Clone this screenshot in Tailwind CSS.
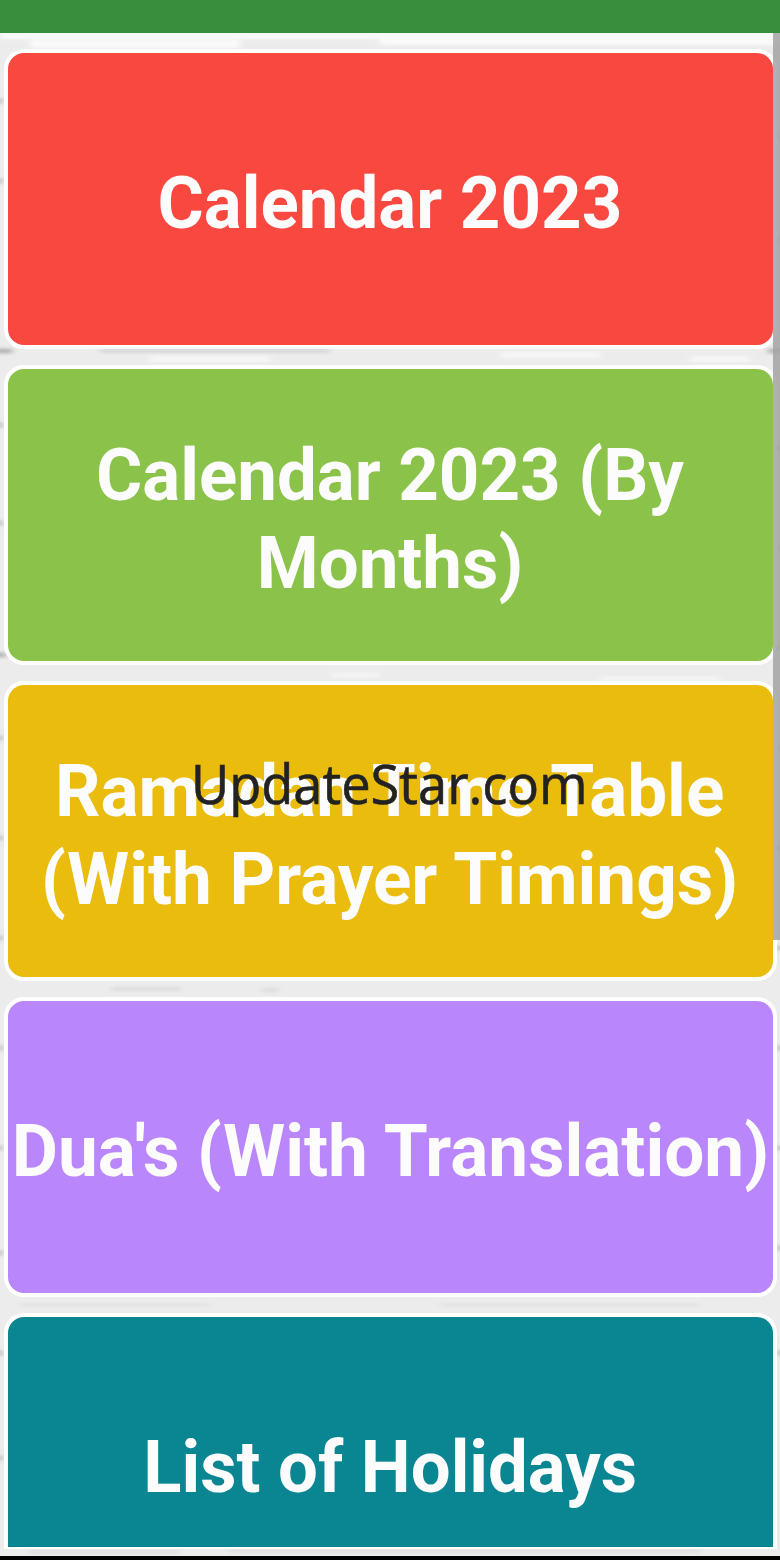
<!DOCTYPE html>
<html lang="en">
<head>
  <meta charset="UTF-8" />
  <meta name="viewport" content="width=device-width, initial-scale=1.0" />
  <title>Calendar 2023</title>
  <script src="https://cdn.jsdelivr.net/npm/@tailwindcss/browser@4"></script>
</head>
<body class="bg-black font-['Roboto',sans-serif]">
  <div class="relative flex h-[1560px] w-[780px] flex-col overflow-hidden">
    <!-- Status bar -->
    <header class="h-[33px] shrink-0 bg-[#388e3c]"></header>

    <main class="relative h-[1523px] overflow-hidden bg-[#ececed]">
      <!-- Brick wall -->
      <svg class="absolute inset-0" width="780" height="1523" aria-hidden="true">
        <defs><filter id="soft" x="-5%" width="110%"><feGaussianBlur stdDeviation="3 1.5" /></filter></defs>
        <g filter="url(#soft)" fill="none">
          <path d="M0 2H780M30 11H240M380 8H780" stroke="#fafafb" stroke-width="8" />
          <path d="M100 318H330" stroke="#d8d8d8" stroke-width="4" />
          <path d="M150 326H270M500 322H600M690 326H750" stroke="#f6f6f6" stroke-width="6" />
          <path d="M330 642H380M600 646H720" stroke="#f4f4f4" stroke-width="5" />
          <path d="M112 956H180M262 957H278" stroke="#dfdfdf" stroke-width="5" />
          <path d="M20 1272H210M440 1272H700" stroke="#e4e4e4" stroke-width="4" />
          <path d="M30 1519H180M230 1518H700" stroke="#d9d6d4" stroke-width="2" />
          <!-- Mortar lines showing at both sides -->
          <path d="M-6 318H12M-6 622H6M768 318H786" stroke="#b5b5b5" stroke-width="5" />
          <path d="M-6 68H3M-6 148H3M-6 392H3M-6 490H3M-6 705H3M-6 805H3M-6 905H3M-6 1015H3M-6 1115H3M-6 1220H3M-6 1320H3M-6 1425H3" stroke="#c4c4c6" stroke-width="5" />
          <path d="M776 105H786M776 205H786M776 415H786M776 515H786M776 615H786M776 715H786M776 815H786M776 915H786M776 1015H786M776 1115H786M776 1215H786M776 1320H786" stroke="#c4c4c6" stroke-width="5" />
        </g>
      </svg>

      <nav class="relative flex flex-col gap-4 px-[3.5px] pt-4 text-center text-[72.5px] leading-[88px] font-bold text-[#fcfcfc]">
        <a href="#" class="flex h-[300px] items-center justify-center rounded-[20px] border-4 border-white bg-[#f94840] pt-2.5"><span class="scale-x-[0.977]">Calendar 2023</span></a>
        <a href="#" class="flex h-[300px] items-center justify-center rounded-[20px] border-4 border-white bg-[#8bc34a] pt-2.5"><span class="scale-x-[0.977]">Calendar 2023 (By<br />Months)</span></a>
        <a href="#" class="flex h-[300px] items-center justify-center rounded-[20px] border-4 border-white bg-[#e9bc0d] pt-2.5"><span class="scale-x-[0.98] whitespace-nowrap">Ramadan Time Table<br />(With Prayer Timings)</span></a>
        <a href="#" class="flex h-[300px] items-center justify-center rounded-[20px] border-4 border-white bg-[#b986fc] pt-2.5"><span class="scale-x-[0.98] whitespace-nowrap">Dua's (With Translation)</span></a>
        <a href="#" class="flex h-[236px] justify-center rounded-t-[20px] border-4 border-b-2 border-white bg-[#0a8693] pt-[107px]"><span class="scale-x-[0.975]">List of Holidays</span></a>
      </nav>

      <!-- Scrollbar -->
      <div class="absolute top-0 right-0 h-[907px] w-[7px] bg-[#a3a3a3]/85"></div>
    </main>

    <!-- Watermark -->
    <p class="absolute top-[745px] left-[191px] origin-left scale-x-[0.953] font-['Open_Sans',sans-serif] text-[55px] leading-[75px] text-[#222] [-webkit-text-stroke:0.6px_#222]">UpdateStar.com</p>
  </div>
</body>
</html>
